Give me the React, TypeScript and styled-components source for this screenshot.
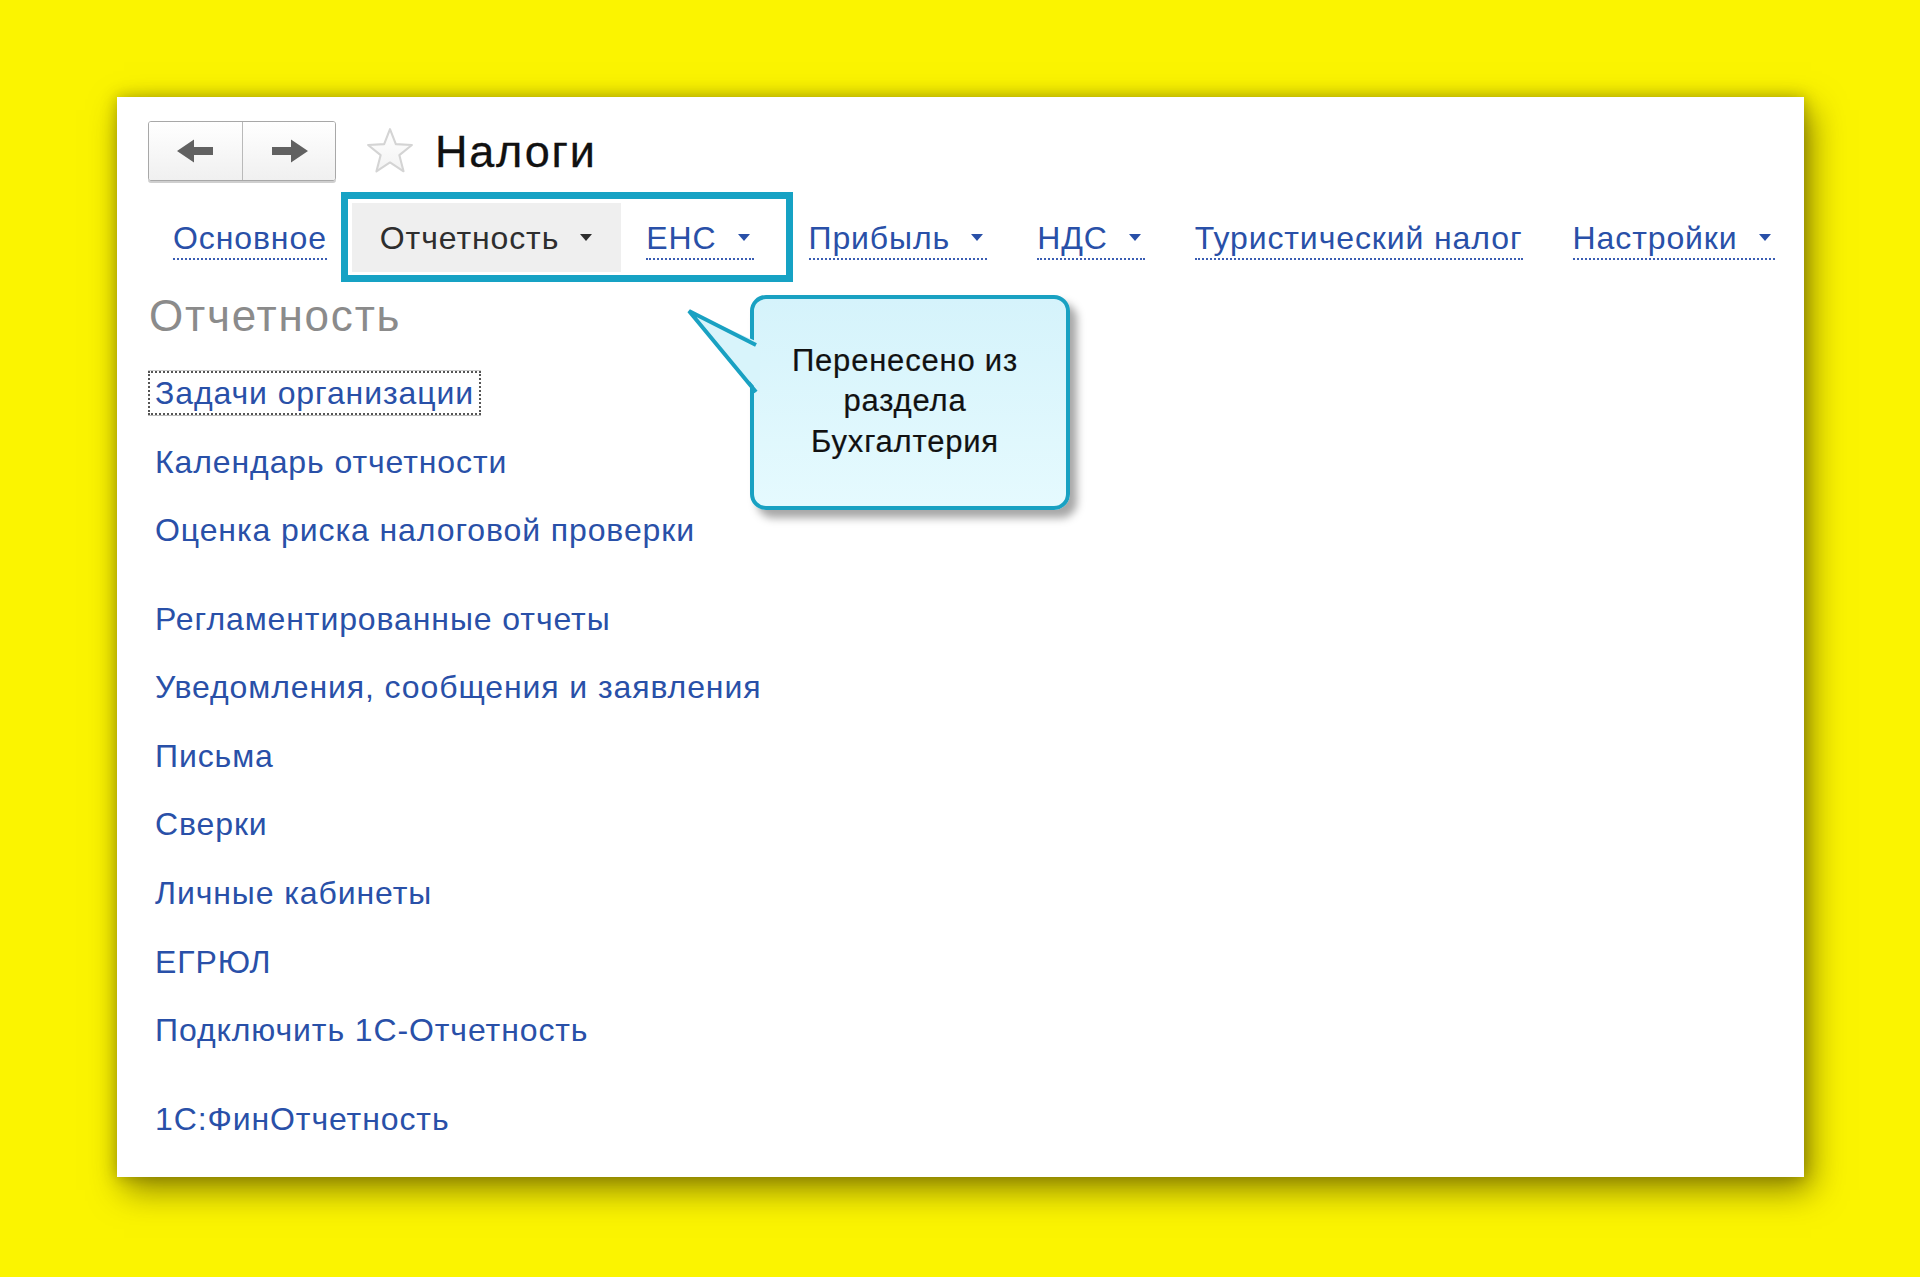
import React from "react";
import styled, { createGlobalStyle } from "styled-components";

const GlobalStyle = createGlobalStyle`
  html, body {
    margin: 0;
    padding: 0;
    background: #fbf400;
  }
  body {
    font-family: "Liberation Sans", Arial, sans-serif;
  }
`;

const Page = styled.div`
  min-height: 1277px;
  box-sizing: border-box;
  padding: 97px 0 0 117px;
  overflow: hidden;
`;

const Panel = styled.div`
  position: relative;
  width: 1687px;
  height: 1080px;
  box-sizing: border-box;
  padding: 24px 0 0 31px;
  background: #ffffff;
  box-shadow: 7px 13px 32px rgba(70, 60, 0, 0.6), 0 0 14px rgba(70, 60, 0, 0.35);
`;

const Header = styled.div`
  display: flex;
  align-items: center;
  height: 60px;
`;

const NavGroup = styled.div`
  display: flex;
  height: 58px;
  border: 1px solid #a8a8a8;
  border-radius: 3px;
  box-shadow: 0 2px 0 #cfcfcf;
  overflow: hidden;
`;

const NavButton = styled.button<{ $divider?: boolean }>`
  width: 93px;
  height: 58px;
  padding: 0;
  margin: 0;
  border: none;
  border-left: ${(p) => (p.$divider ? "1px solid #b9b9b9" : "none")};
  background: linear-gradient(#ffffff, #f0f0f0);
  display: flex;
  align-items: center;
  justify-content: center;
  cursor: pointer;
`;

const StarWrap = styled.div`
  margin-left: 28px;
  width: 52px;
  height: 50px;
  display: flex;
  align-items: center;
  justify-content: center;
`;

const Title = styled.h1`
  margin: 0 0 0 19px;
  font-family: "Liberation Sans", Arial, sans-serif;
  font-weight: normal;
  font-size: 45px;
  letter-spacing: 1.8px;
  color: #111;
  line-height: 1;
  -webkit-text-stroke: 0.3px #111;
`;

const TabBar = styled.div`
  display: flex;
  margin-top: 22px;
  height: 69px;
`;

const HighlightGroup = styled.div`
  position: relative;
  display: flex;
  &::after {
    content: "";
    position: absolute;
    top: -11px;
    left: -11px;
    right: -9px;
    bottom: -10px;
    border: 7px solid #16a2c4;
    pointer-events: none;
  }
`;

const Tab = styled.div<{ $active?: boolean; $extraRight?: boolean }>`
  display: flex;
  align-items: center;
  padding: 0 ${(p) => (p.$extraRight ? "30px" : "25px")} 0 ${(p) => (p.$active ? "28px" : "25px")};
  height: 69px;
  background: ${(p) => (p.$active ? "#efefef" : "transparent")};
`;

const TabLabel = styled.span<{ $active?: boolean }>`
  display: flex;
  align-items: center;
  font-size: 32px;
  letter-spacing: 0.9px;
  line-height: 32px;
  color: ${(p) => (p.$active ? "#2e2e2e" : "#2950a8")};
  padding-top: 6px;
  padding-bottom: 4px;
  border-bottom: 2px ${(p) => (p.$active ? "solid transparent" : "dotted #3a5db3")};
  white-space: nowrap;
`;

const Caret = styled.span`
  display: inline-block;
  margin-left: 21px;
  margin-right: 4px;
  width: 0;
  height: 0;
  border-left: 6px solid transparent;
  border-right: 6px solid transparent;
  border-top: 7px solid currentColor;
`;

const Heading = styled.h2`
  margin: 19px 0 0 1px;
  font-weight: normal;
  font-size: 44px;
  line-height: 50px;
  letter-spacing: 1.8px;
  color: #8b8b8b;
`;

const LinkList = styled.div`
  display: flex;
  flex-direction: column;
  margin-top: 30px;
`;

const LinkGroup = styled.div`
  display: flex;
  flex-direction: column;
  gap: 24.6px;
  & + & {
    margin-top: 44.5px;
  }
`;

const LinkItem = styled.a<{ $focused?: boolean }>`
  align-self: flex-start;
  display: block;
  height: 40px;
  padding: 0 5px;
  font-size: 32px;
  line-height: 40px;
  letter-spacing: 0.9px;
  color: #2950a8;
  text-decoration: none;
  white-space: nowrap;
  border: 2px ${(p) => (p.$focused ? "dotted #555" : "solid transparent")};
  box-shadow: ${(p) => (p.$focused ? "0 1px 0 #bbb, 0 -1px 0 #ccc" : "none")};
`;

const Callout = styled.div`
  position: absolute;
  left: 633px;
  top: 198px;
  width: 320px;
  height: 215px;
  box-sizing: border-box;
  padding-right: 10px;
  border: 4px solid #19a1c2;
  border-radius: 16px;
  background: linear-gradient(#d5f3fb, #e5fafe);
  box-shadow: 7px 8px 9px rgba(0, 0, 0, 0.35);
  display: flex;
  align-items: center;
  justify-content: center;
`;

const CalloutText = styled.p`
  margin: 0 0 2px 0;
  text-align: center;
  font-size: 31px;
  line-height: 40.5px;
  letter-spacing: 0.8px;
  color: #111;
  -webkit-text-stroke: 0.2px #111;
`;

const Tail = styled.svg`
  position: absolute;
  left: -74px;
  top: -4px;
  width: 84px;
  height: 110px;
  overflow: visible;
`;

const ArrowIcon = ({ dir }: { dir: "left" | "right" }) => (
  <svg width="38" height="24" viewBox="0 0 38 24" style={dir === "right" ? { transform: "scaleX(-1)" } : undefined}>
    <path d="M0 12 L17 0.5 L17 8 L36 8 L36 16 L17 16 L17 23.5 Z" fill="#616161" />
  </svg>
);

const StarIcon = () => (
  <svg width="50" height="48" viewBox="0 0 48 46">
    <defs>
      <linearGradient id="sg" x1="0" y1="0" x2="0" y2="1">
        <stop offset="0" stopColor="#ffffff" />
        <stop offset="1" stopColor="#f3f3f3" />
      </linearGradient>
    </defs>
    <path
      d="M24 2 L29.6 16.4 L45 17.2 L33 27 L37 42.5 L24 34 L11 42.5 L15 27 L3 17.2 L18.4 16.4 Z"
      fill="url(#sg)"
      stroke="#d4d4d4"
      strokeWidth="2"
      strokeLinejoin="round"
    />
  </svg>
);

type TabDef = { label: string; caret?: boolean };

const tabsBefore: TabDef[] = [{ label: "Основное" }];
const tabsAfter: TabDef[] = [
  { label: "Прибыль", caret: true },
  { label: "НДС", caret: true },
  { label: "Туристический налог" },
  { label: "Настройки", caret: true },
];

const groups: string[][] = [
  ["Задачи организации", "Календарь отчетности", "Оценка риска налоговой проверки"],
  [
    "Регламентированные отчеты",
    "Уведомления, сообщения и заявления",
    "Письма",
    "Сверки",
    "Личные кабинеты",
    "ЕГРЮЛ",
    "Подключить 1С-Отчетность",
  ],
  ["1С:ФинОтчетность"],
];

const TabItem = ({ tab, active, extraRight }: { tab: TabDef; active?: boolean; extraRight?: boolean }) => (
  <Tab $active={active} $extraRight={extraRight}>
    <TabLabel $active={active}>
      {tab.label}
      {tab.caret && <Caret />}
    </TabLabel>
  </Tab>
);

export default function App() {
  return (
    <>
      <GlobalStyle />
      <Page>
        <Panel>
          <Header>
            <NavGroup>
              <NavButton aria-label="Назад">
                <ArrowIcon dir="left" />
              </NavButton>
              <NavButton $divider aria-label="Вперед">
                <ArrowIcon dir="right" />
              </NavButton>
            </NavGroup>
            <StarWrap>
              <StarIcon />
            </StarWrap>
            <Title>Налоги</Title>
          </Header>

          <TabBar>
            {tabsBefore.map((t) => (
              <TabItem key={t.label} tab={t} />
            ))}
            <HighlightGroup>
              <TabItem tab={{ label: "Отчетность", caret: true }} active />
              <TabItem tab={{ label: "ЕНС", caret: true }} extraRight />
            </HighlightGroup>
            {tabsAfter.map((t) => (
              <TabItem key={t.label} tab={t} />
            ))}
          </TabBar>

          <Heading>Отчетность</Heading>

          <LinkList>
            {groups.map((g, gi) => (
              <LinkGroup key={gi}>
                {g.map((l, li) => (
                  <LinkItem key={l} href="#" $focused={gi === 0 && li === 0}>
                    {l}
                  </LinkItem>
                ))}
              </LinkGroup>
            ))}
          </LinkList>

          <Callout>
            <Tail viewBox="0 0 84 110">
              <polygon points="9,16 80,48 80,98" fill="#d8f4fb" />
              <polyline
                points="76,50 9,16 76,97"
                fill="none"
                stroke="#19a1c2"
                strokeWidth="4"
                strokeLinejoin="miter"
              />
            </Tail>
            <CalloutText>
              Перенесено из
              <br />
              раздела
              <br />
              Бухгалтерия
            </CalloutText>
          </Callout>
        </Panel>
      </Page>
    </>
  );
}
